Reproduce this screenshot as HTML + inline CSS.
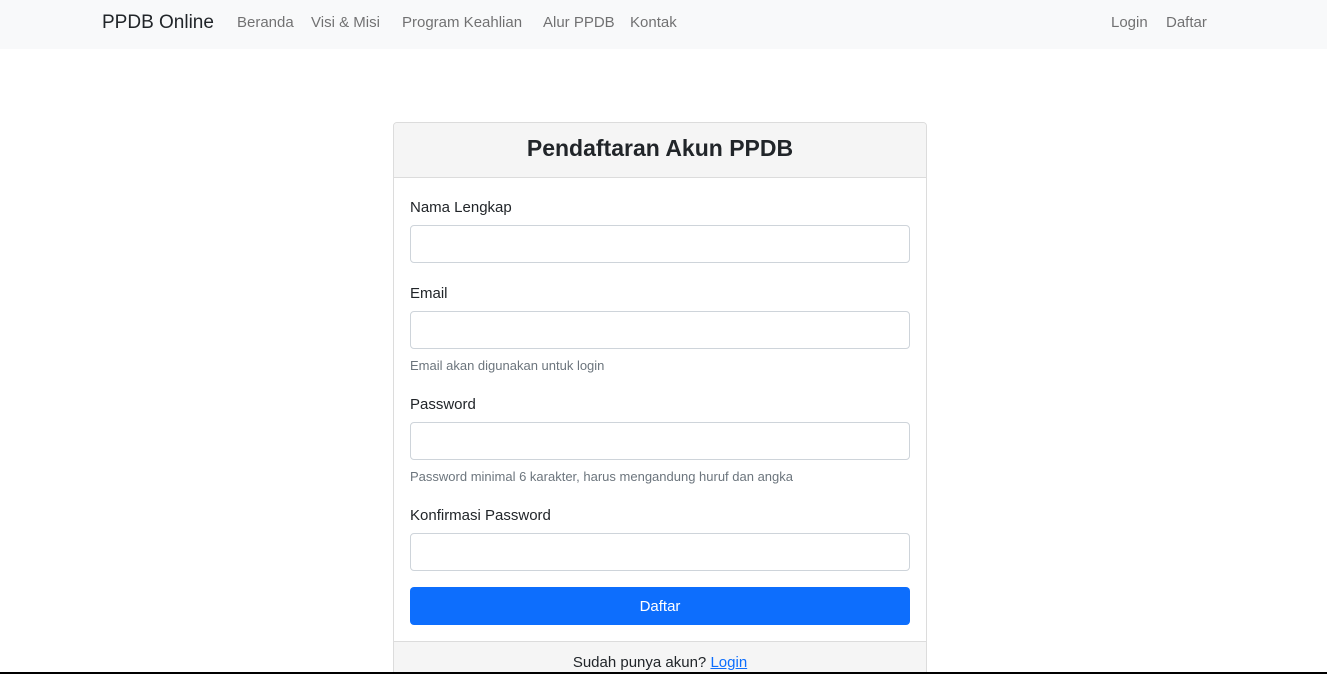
<!DOCTYPE html>
<html><head><style>
*{box-sizing:border-box;margin:0;padding:0}
html,body{width:1327px;height:674px;overflow:hidden}
body{background:#fff;font-family:"Liberation Sans",sans-serif;color:#212529;position:relative}
nav{height:49px;background:#f8f9fa;position:relative}
nav span{position:absolute;top:14px;font-size:15px;color:rgba(0,0,0,.55)}
.brand{left:102px;top:12px!important;font-size:19px!important;color:#212529!important}
.card{position:absolute;left:393px;top:122px;width:534px;height:560px;border:1px solid #dcdcdc;border-radius:4px;overflow:hidden}
.hd{height:55px;background:#f5f5f5;border-bottom:1px solid #dcdcdc;text-align:center;font-size:23px;font-weight:bold;line-height:50px}
.lbl{position:absolute;left:16px;font-size:15px}
.inp{position:absolute;left:16px;width:500px;height:38px;border:1px solid #ced4da;border-radius:4px}
.hint{position:absolute;left:16px;font-size:13px;color:#6c757d}
.btn{position:absolute;left:16px;top:464px;width:500px;height:38px;background:#0d6efd;border-radius:4px;color:#fff;text-align:center;line-height:40px;font-size:15px}
.ft{position:absolute;left:0;top:518px;width:100%;height:60px;background:#f5f5f5;border-top:1px solid #dcdcdc;text-align:center;font-size:15px;padding-top:12px}
.ft a{color:#0d6efd}
.line{position:absolute;left:0;top:672px;width:1327px;height:2px;background:#000}
</style></head><body>
<nav>
<span class="brand">PPDB Online</span>
<span style="left:237px">Beranda</span>
<span style="left:311px">Visi &amp; Misi</span>
<span style="left:402px">Program Keahlian</span>
<span style="left:543px">Alur PPDB</span>
<span style="left:630px">Kontak</span>
<span style="left:1111px">Login</span>
<span style="left:1166px">Daftar</span>
</nav>
<div class="card">
<div class="hd">Pendaftaran Akun PPDB</div>
<div class="lbl" style="top:76px">Nama Lengkap</div>
<div class="inp" style="top:102px"></div>
<div class="lbl" style="top:162px">Email</div>
<div class="inp" style="top:188px"></div>
<div class="hint" style="top:235px">Email akan digunakan untuk login</div>
<div class="lbl" style="top:273px">Password</div>
<div class="inp" style="top:299px"></div>
<div class="hint" style="top:346px">Password minimal 6 karakter, harus mengandung huruf dan angka</div>
<div class="lbl" style="top:384px">Konfirmasi Password</div>
<div class="inp" style="top:410px"></div>
<div class="btn">Daftar</div>
<div class="ft">Sudah punya akun? <a href="#">Login</a></div>
</div>
<div class="line"></div>
</body></html>
